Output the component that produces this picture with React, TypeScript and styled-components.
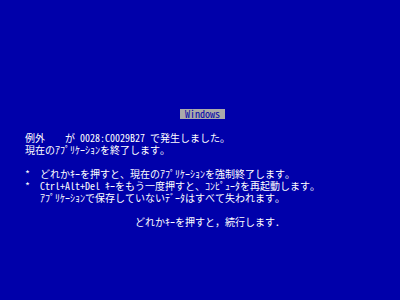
import React from 'react';
import styled, { createGlobalStyle } from 'styled-components';

const GlobalStyle = createGlobalStyle`
  html, body {
    margin: 0;
    padding: 0;
    background: #0000aa;
  }
`;

// one text cell is 5px wide and 12px tall (80x25 text screen scaled to 400x300)
const CELL_W = 5;

const Screen = styled.div`
  width: 400px;
  height: 300px;
  background: #0000aa;
  color: #ffffff;
  font-family: "Noto Sans Mono CJK JP", "Noto Sans CJK JP", monospace;
  font-size: 10px;
  display: flex;
  flex-direction: column;
  padding-top: 108px;
  box-sizing: border-box;
  overflow: hidden;
`;

const Line = styled.div<{ $col?: number }>`
  height: 12px;
  line-height: 12px;
  padding-left: ${({ $col = 0 }) => $col * CELL_W}px;
  white-space: pre;
`;

const Label = styled.span`
  display: inline-block;
  background: #aaaaaa;
  color: #0000aa;
  height: 10px;
  line-height: 10px;
  margin-top: 1px;
  vertical-align: top;
`;

const App: React.FC = () => {
  return (
    <>
      <GlobalStyle />
      <Screen>
        <Line $col={36}>
          <Label> Windows </Label>
        </Line>
        <Line />
        <Line $col={5}>例外    が 0028:C0029B27 で発生しました。</Line>
        <Line $col={5}>現在のｱﾌﾟﾘｹｰｼｮﾝを終了します。</Line>
        <Line />
        <Line $col={5}>*  どれかｷｰを押すと、現在のｱﾌﾟﾘｹｰｼｮﾝを強制終了します。</Line>
        <Line $col={5}>*  Ctrl+Alt+Del ｷｰをもう一度押すと、ｺﾝﾋﾟｭｰﾀを再起動します。</Line>
        <Line $col={8}>ｱﾌﾟﾘｹｰｼｮﾝで保存していないﾃﾞｰﾀはすべて失われます。</Line>
        <Line />
        <Line $col={27}>どれかｷｰを押すと，続行します．</Line>
      </Screen>
    </>
  );
};

export default App;
